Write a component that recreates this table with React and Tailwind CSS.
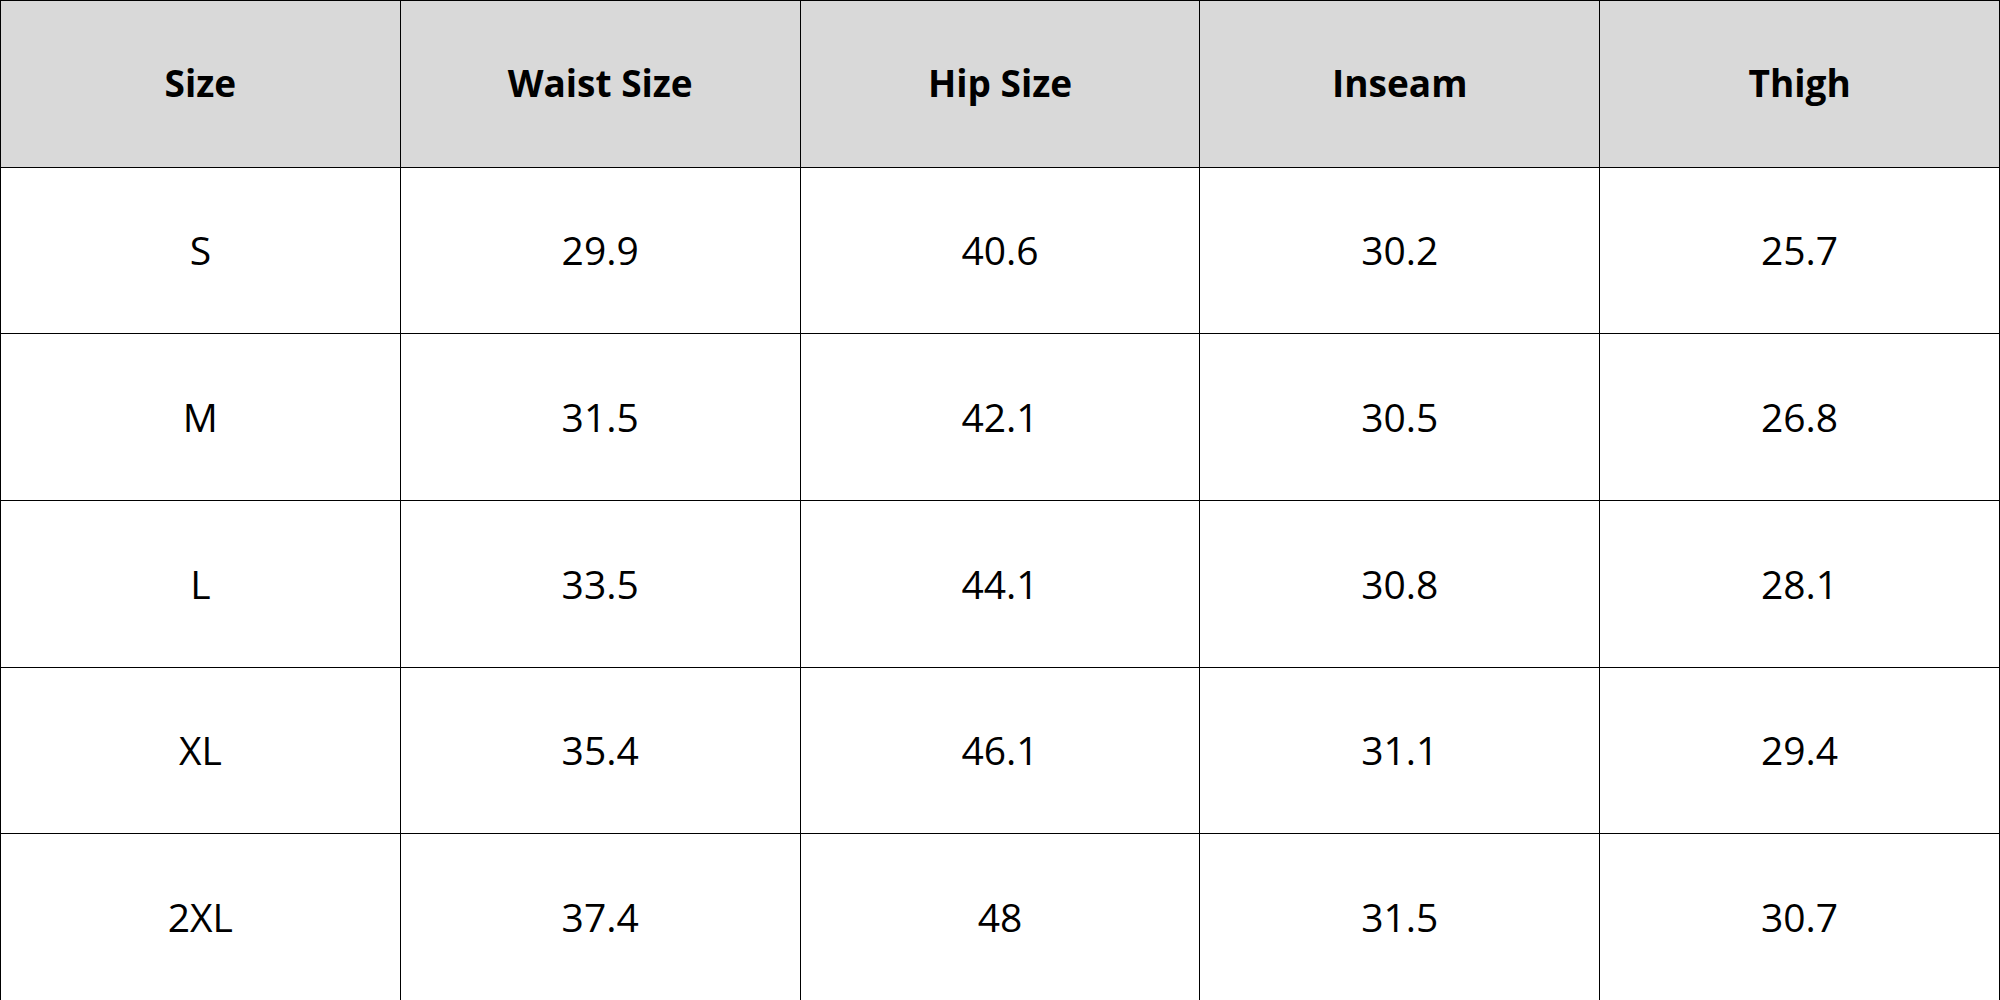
const headers = ['Size', 'Waist Size', 'Hip Size', 'Inseam', 'Thigh']

const rows = [
  ['S', '29.9', '40.6', '30.2', '25.7'],
  ['M', '31.5', '42.1', '30.5', '26.8'],
  ['L', '33.5', '44.1', '30.8', '28.1'],
  ['XL', '35.4', '46.1', '31.1', '29.4'],
  ['2XL', '37.4', '48', '31.5', '30.7'],
]

export default function App() {
  return (
    <div className="w-[2000px] h-[1000px] bg-white font-['Open_Sans',sans-serif] text-black">
      <table className="w-full h-full table-fixed border-collapse">
        <thead>
          <tr className="h-[166.67px] bg-[#d9d9d9]">
            {headers.map((h) => (
              <th key={h} className="border-[1.5px] border-black text-[37px] font-bold text-center align-middle pb-[2px]">
                {h}
              </th>
            ))}
          </tr>
        </thead>
        <tbody>
          {rows.map((row) => (
            <tr key={row[0]} className="h-[166.67px]">
              {row.map((cell, i) => (
                <td key={i} className="border-[1.5px] border-black text-[39px] text-center align-middle">
                  {cell}
                </td>
              ))}
            </tr>
          ))}
        </tbody>
      </table>
    </div>
  )
}
